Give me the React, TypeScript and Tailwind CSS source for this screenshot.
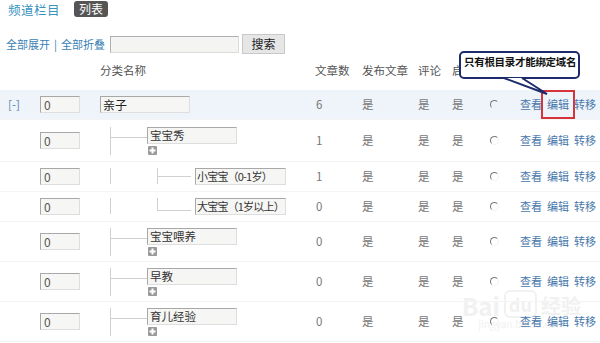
import React from "react";

type Row = {
  level: 0 | 1 | 2;
  name: string;
  count: string;
  h: string;
  hl?: boolean;
  plus?: boolean;
  last?: boolean;
};

const rows: Row[] = [
  { level: 0, name: "亲子", count: "6", h: "h-[30px]", hl: true },
  { level: 1, name: "宝宝秀", count: "1", h: "h-[42px]", plus: true },
  { level: 2, name: "小宝宝（0-1岁）", count: "1", h: "h-[30px]" },
  { level: 2, name: "大宝宝（1岁以上）", count: "0", h: "h-[30px]", last: true },
  { level: 1, name: "宝宝喂养", count: "0", h: "h-[40px]", plus: true },
  { level: 1, name: "早教", count: "0", h: "h-[40px]", plus: true },
  { level: 1, name: "育儿经验", count: "0", h: "h-[40px]", plus: true },
];

const inputBox =
  "h-[17px] border border-t-[#a8a8a8] border-l-[#a8a8a8] border-b-[#dedede] border-r-[#dedede] bg-[#f6f6f4] text-[#222] leading-[15px] overflow-hidden whitespace-nowrap";

const grid =
  "grid grid-cols-[40px_60px_210px_45px_56px_34px_40px_30px_85px] items-center";

function PlusIcon() {
  return (
    <div className="w-[9px] h-[9px] rounded-[1px] bg-[#9a9a9a] flex items-center justify-center">
      <svg width="7" height="7" viewBox="0 0 7 7">
        <rect x="2.5" y="0.5" width="2" height="6" fill="#fff" />
        <rect x="0.5" y="2.5" width="6" height="2" fill="#fff" />
      </svg>
    </div>
  );
}

function NameCell({ r }: { r: Row }) {
  if (r.level === 0) {
    return <div className={`${inputBox} w-[90px] pl-[2px] text-[12px]`}>{r.name}</div>;
  }
  if (r.level === 1) {
    return (
      <div className="flex items-start h-[28px]">
        <div className="ml-[10px] w-px h-[28px] bg-[#d0d0d0]" />
        <div className="w-[36px] h-px mt-[10px] bg-[#d0d0d0]" />
        <div className="flex flex-col">
          <div className={`${inputBox} w-[90px] pl-[2px] text-[11.5px] text-[#333]`}>{r.name}</div>
          <div className="mt-[2px] ml-[1px]">{r.plus && <PlusIcon />}</div>
        </div>
      </div>
    );
  }
  return (
    <div className="flex items-start h-[18px]">
      <div className="ml-[10px] w-px h-[16px] bg-[#d0d0d0]" />
      <div className={`ml-[46px] w-px ${r.last ? "h-[13px]" : "h-[16px]"} bg-[#d0d0d0]`} />
      <div className={`w-[33px] h-px ${r.last ? "mt-[12px]" : "mt-[8px]"} bg-[#d0d0d0]`} />
      <div className={`${inputBox} ml-[4px] w-[91px] pl-[1px] text-[11px] tracking-[-0.8px] text-[#333]`}>{r.name}</div>
    </div>
  );
}

function Radio() {
  return (
    <div className="w-[9px] h-[9px] rounded-full border border-t-[#777] border-l-[#777] border-b-[#f2f2f2] border-r-[#f2f2f2]" />
  );
}

export default function App() {
  return (
    <div className="relative w-[600px] h-[343px] overflow-hidden bg-white text-[#777] font-['Noto_Sans_CJK_SC','Liberation_Sans',sans-serif]">
      {/* watermark (behind content) */}
      <div className="absolute z-0 left-[462px] top-[290px] flex flex-col items-center pointer-events-none">
        <div className="flex items-end gap-[4px] text-[24px] font-bold leading-[24px] text-[#f1f1f1]">
          <span>Bai</span>
          <span className="text-[18px] px-[3px] rounded-[6px] border-2 border-[#f1f1f1]">du</span>
          <span className="text-[20px]">经验</span>
        </div>
        <div className="text-[10px] leading-[12px] text-[#f1f1f1]">jingyan.baidu.com</div>
      </div>

      <div className="relative z-10">
        {/* title */}
        <div className="flex items-center h-[20px] pl-[8px]">
          <span className="text-[12.5px] tracking-[0.5px] text-[#3a93bf]">频道栏目</span>
          <span className="ml-[14px] mt-[-2px] px-[5px] h-[16px] leading-[16px] rounded-[3px] bg-[#555] text-white text-[12px]">
            列表
          </span>
        </div>

        {/* search */}
        <div className="mt-[14px] flex items-center h-[20px] pl-[6px]">
          <span className="text-[11px] text-[#3a7fb5]">全部展开</span>
          <span className="mx-[4px] text-[11px] text-[#3a7fb5]">|</span>
          <span className="text-[11px] text-[#3a7fb5]">全部折叠</span>
          <div className="ml-[5px] w-[129px] h-[17px] border border-t-[#b0b0b0] border-l-[#b0b0b0] border-b-[#dcdcdc] border-r-[#dcdcdc] bg-[#f4f4f2]" />
          <div className="ml-[3px] w-[43px] h-[20px] flex items-center justify-center border border-[#c8c8c8] bg-[#e6e6e6] text-[12px] text-[#222]">
            搜索
          </div>
        </div>

        {/* header */}
        <div className={`${grid} mt-[8px] h-[18px] text-[11.5px] text-[#555]`}>
          <div />
          <div />
          <div>分类名称</div>
          <div className="pl-[5px]">文章数</div>
          <div className="pl-[7px]">发布文章</div>
          <div className="pl-[7px]">评论</div>
          <div className="pl-[7px]">启用</div>
          <div />
          <div />
        </div>

        {/* rows */}
        <div className="mt-[10px]">
          {rows.map((r, i) => (
            <div
              key={i}
              className={`${grid} ${r.h} border-b border-[#f4f4f4] ${r.hl ? "bg-[#eef4fa]" : ""}`}
            >
              <div className="pl-[8px] text-[11.5px] text-[#5b86ad]">{r.level === 0 ? "[-]" : ""}</div>
              <div className={`${inputBox} w-[40px] pl-[3px] text-[12px] text-[#555]`}>0</div>
              <div>
                <NameCell r={r} />
              </div>
              <div className="pl-[6px] text-[11.5px]">{r.count}</div>
              <div className="pl-[7px] text-[11.5px]">是</div>
              <div className="pl-[7px] text-[11.5px]">是</div>
              <div className="pl-[7px] text-[11.5px]">是</div>
              <div className="pl-[5px]">
                <Radio />
              </div>
              <div className="pl-[5px] flex gap-[5px] text-[11px] text-[#4677ab]">
                <span>查看</span>
                <span className={r.hl ? "outline-2 outline-solid outline-[#d4343a] outline-offset-[4px]" : ""}>编辑</span>
                <span>转移</span>
              </div>
            </div>
          ))}
        </div>

        {/* tooltip */}
        <div className="absolute left-[459px] top-[51px] w-[121px] h-[28px] rounded-[5px] border-2 border-[#1d2b6b] bg-white pl-[3px] pt-[1px] text-[10.5px] font-bold text-[#111] tracking-[-0.3px] whitespace-nowrap">
          只有根目录才能绑定域名
        </div>
        <svg className="absolute left-[500px] top-[75px]" width="52" height="22" viewBox="0 0 52 22">
          <polygon points="4,3 22,3 47,19" fill="#fff" />
          <polyline points="4,3 47,19 22,3" fill="none" stroke="#1d2b6b" strokeWidth="2" />
        </svg>
      </div>
    </div>
  );
}
